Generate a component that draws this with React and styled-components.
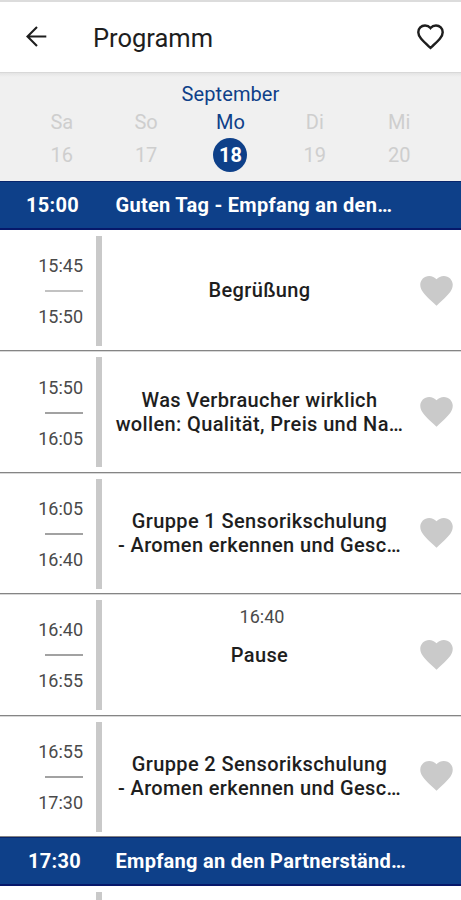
import React from "react";
import styled, { createGlobalStyle, css } from "styled-components";

const colors = {
  primary: "#0e4089",
  text: "#1e1e1e",
  time: "#4a4a4a",
  muted: "#cecece",
  icon: "#cacaca",
};

const GlobalStyle = createGlobalStyle`
  * {
    box-sizing: border-box;
  }
  body {
    margin: 0;
    background: #fff;
    color: ${colors.text};
    font-family: Roboto, "Liberation Sans", sans-serif;
  }
`;

const Screen = styled.div`
  width: 100%;
  height: 900px;
  display: flex;
  flex-direction: column;
  overflow: hidden;
`;

const Header = styled.header`
  flex: none;
  height: 73px;
  display: flex;
  align-items: center;
  padding: 0 15px 1px 21px;
  border-top: 2px solid #dcdcdc;
  border-bottom: 1px solid #d8d8d8;
`;

const IconButton = styled.button`
  display: flex;
  padding: 0;
  border: 0;
  background: none;
  color: ${(props) => props.color || colors.text};
`;

const Title = styled.h1`
  flex: 1;
  margin: 2px 0 0 41px;
  font-size: 25.5px;
  font-weight: 400;
`;

const Calendar = styled.section`
  flex: none;
  height: 108px;
  padding: 7px 19.6px 0;
  background: linear-gradient(#e4e4e4, #f0f0f0 4px);
`;

const Month = styled.div`
  font-size: 20px;
  line-height: 28px;
  text-align: center;
  letter-spacing: 0.1px;
  color: ${colors.primary};
`;

const Days = styled.div`
  display: grid;
  grid-template-columns: repeat(5, 1fr);
  padding-top: 1px;
`;

const Day = styled.div`
  display: flex;
  flex-direction: column;
  align-items: center;
  font-size: 20px;
  line-height: 27px;
  color: ${(props) => (props.$active ? colors.primary : colors.muted)};
`;

const DayNumber = styled.span`
  width: 34px;
  height: 34px;
  margin-top: 2px;
  border-radius: 50%;
  line-height: 35px;
  text-align: center;
  ${(props) =>
    props.$active &&
    css`
      background: ${colors.primary};
      color: #fff;
      font-weight: 700;
    `}
`;

const SectionBar = styled.div`
  flex: none;
  height: 49px;
  display: flex;
  align-items: center;
  background: ${colors.primary};
  border-top: 1px solid #08266c;
  border-bottom: 2px solid #06186a;
  color: #fff;
  font-size: 20px;
  font-weight: 700;
  letter-spacing: 0.28px;
`;

const SectionTime = styled.span`
  width: 115.5px;
  padding-left: ${(props) => props.$indent}px;
`;

const Row = styled.div`
  flex: none;
  height: 121.4px;
  display: grid;
  grid-template-columns: 95.5px 6.5px 1fr 49px;
  border-bottom: 1px solid #858585;
  box-shadow: 0 1px 0 #d8d8d8;
`;

const Times = styled.div`
  display: flex;
  flex-direction: column;
  align-items: flex-end;
  padding: 24.3px 12.5px 0 0;
  font-size: 18px;
  line-height: 24px;
  color: ${colors.time};
`;

const Dash = styled.span`
  width: 38px;
  height: 2px;
  margin: 12px 0 13px;
  background: ${(props) => (props.$light ? "#c2c2c2" : "#a2a2a2")};
`;

const Divider = styled.div`
  height: 110px;
  margin-top: 6px;
  background: #c9c9c9;
`;

const Content = styled.div`
  display: grid;
  grid-template-rows: 1fr auto 1fr;
  justify-items: center;
  padding: 1px 0 0 5px;
`;

const Note = styled.div`
  padding: 10px 0 0 5px;
  font-size: 18px;
  line-height: 24px;
  color: ${colors.time};
`;

const Name = styled.div`
  grid-row: 2;
  font-size: 20px;
  font-weight: 500;
  line-height: 24.5px;
  letter-spacing: 0.37px;
  text-align: center;
  white-space: pre;
`;

const Like = styled(IconButton)`
  align-self: center;
  margin-left: 5px;
`;

const HEART =
  "M12 21.35l-1.45-1.32C5.4 15.36 2 12.28 2 8.5 2 5.42 4.42 3 7.5 3c1.74 0 3.41.81 4.5 2.09C13.09 3.81 14.76 3 16.5 3 19.58 3 22 5.42 22 8.5c0 3.78-3.4 6.86-8.55 11.54L12 21.35z";

const HeartIcon = () => (
  <svg width="39" height="39" viewBox="0 0 24 24" fill="currentColor">
    <path d={HEART} />
  </svg>
);

const HeartOutlineIcon = () => (
  <svg
    width="31"
    height="31"
    viewBox="-0.7 -0.7 25.4 25.4"
    fill="none"
    stroke="currentColor"
    strokeWidth="2"
  >
    <path d={HEART} />
  </svg>
);

const ArrowIcon = () => (
  <svg
    width="31"
    height="31"
    viewBox="0 0 31 31"
    fill="none"
    stroke="currentColor"
    strokeWidth="2.1"
  >
    <path d="M25.3 15.5H6.5M16 6L6.5 15.5L16 25" />
  </svg>
);

const days = [
  { name: "Sa", number: 16 },
  { name: "So", number: 17 },
  { name: "Mo", number: 18, active: true },
  { name: "Di", number: 19 },
  { name: "Mi", number: 20 },
];

const sessions = [
  { from: "15:45", to: "15:50", name: "Begrüßung", light: true },
  {
    from: "15:50",
    to: "16:05",
    name: "Was Verbraucher wirklich\nwollen: Qualität, Preis und Na…",
  },
  {
    from: "16:05",
    to: "16:40",
    name: "Gruppe 1 Sensorikschulung\n- Aromen erkennen und Gesc…",
  },
  { from: "16:40", to: "16:55", name: "Pause", note: "16:40" },
  {
    from: "16:55",
    to: "17:30",
    name: "Gruppe 2 Sensorikschulung\n- Aromen erkennen und Gesc…",
  },
];

const Session = ({ from, to, name, note, light }) => (
  <Row>
    <Times>
      <span>{from}</span>
      <Dash $light={light} />
      <span>{to}</span>
    </Times>
    <Divider />
    <Content>
      {note && <Note>{note}</Note>}
      <Name>{name}</Name>
    </Content>
    <Like color={colors.icon} aria-label="Favorit">
      <HeartIcon />
    </Like>
  </Row>
);

const App = () => (
  <>
    <GlobalStyle />
    <Screen>
      <Header>
        <IconButton aria-label="Zurück">
          <ArrowIcon />
        </IconButton>
        <Title>Programm</Title>
        <IconButton aria-label="Favoriten">
          <HeartOutlineIcon />
        </IconButton>
      </Header>
      <Calendar>
        <Month>September</Month>
        <Days>
          {days.map((day) => (
            <Day key={day.number} $active={day.active}>
              {day.name}
              <DayNumber $active={day.active}>{day.number}</DayNumber>
            </Day>
          ))}
        </Days>
      </Calendar>
      <SectionBar>
        <SectionTime $indent={26}>15:00</SectionTime>
        Guten Tag - Empfang an den…
      </SectionBar>
      {sessions.map((session) => (
        <Session key={session.from} {...session} />
      ))}
      <SectionBar>
        <SectionTime $indent={28}>17:30</SectionTime>
        Empfang an den Partnerständ…
      </SectionBar>
      <Row>
        <Times />
        <Divider />
      </Row>
    </Screen>
  </>
);

export default App;
